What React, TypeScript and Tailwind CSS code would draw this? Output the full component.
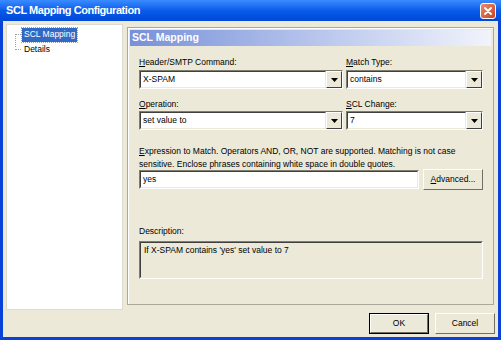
import React from 'react';

const font = "font-['Liberation_Sans',sans-serif]";

function Combo({ value, width }: { value: string; width: string }) {
  return (
    <div className={`${width} h-[19px] flex bg-white border border-t-[#7F7C70] border-l-[#7F7C70] border-b-white border-r-white`}>
      <div className="flex-1 flex items-center pl-[2px] border border-t-[#404040] border-l-[#404040] border-b-[#ECE9D8] border-r-[#ECE9D8] text-[8.5px] text-black">
        {value}
      </div>
      <div className="w-[16px] flex items-center justify-center bg-[#ECE9D8] border border-t-white border-l-white border-b-[#404040] border-r-[#404040]">
        <svg width="7" height="4" viewBox="0 0 7 4">
          <path d="M0 0h7L3.5 4z" fill="#000" />
        </svg>
      </div>
    </div>
  );
}

function Btn({ children, isDefault }: { children: React.ReactNode; isDefault?: boolean }) {
  return (
    <div className={`w-[60px] h-[21px] ${isDefault ? 'border border-black' : ''}`}>
      <div className="w-full h-full flex items-center justify-center bg-[#ECE9D8] border border-t-white border-l-white border-b-[#716F64] border-r-[#716F64] text-[8.5px] text-black">
        {children}
      </div>
    </div>
  );
}

export default function App() {
  return (
    <div className={`w-[501px] h-[340px] bg-[#0842D8] flex flex-col ${font}`}>
      <div className="h-[21px] flex items-center justify-between pl-[6px] pr-[5px] bg-gradient-to-b from-[#3A8CFF] via-[#0A5BEB] to-[#0048D6]">
        <span className="text-white font-bold text-[11px] tracking-[-0.45px]">SCL Mapping Configuration</span>
        <div className="w-[16px] h-[16px] rounded-[3px] border border-white bg-gradient-to-br from-[#E98A6C] to-[#C8421F] flex items-center justify-center">
          <svg width="8" height="8" viewBox="0 0 8 8">
            <path d="M1 1l6 6M7 1l-6 6" stroke="#fff" strokeWidth="1.8" strokeLinecap="round" />
          </svg>
        </div>
      </div>
      <div className="flex-1 mx-[3px] mb-[3px] bg-[#ECE9D8] flex flex-col">
        <div className="flex gap-[4px] pt-[3px] pl-[3px]">
          {/* tree */}
          <div className="w-[117px] h-[286px] bg-white border border-[#DDDBD0] pt-[2px] text-[8.5px]">
            <div className="relative pl-[15px]">
              <div className="absolute left-[8px] top-[7px] h-[13px] border-l border-dotted border-[#A0A0A0]" />
              <div className="flex items-center h-[15px]">
                <span className="w-[6px] border-t border-dotted border-[#A0A0A0] -ml-[7px] mr-[1px]" />
                <span className="bg-[#316AC5] text-white px-[2px] h-[14px] flex items-center outline outline-1 outline-dotted outline-[#C0A060]">SCL Mapping</span>
              </div>
              <div className="flex items-center h-[14px]">
                <span className="w-[6px] border-t border-dotted border-[#A0A0A0] -ml-[7px] mr-[1px]" />
                <span className="px-[2px] text-black">Details</span>
              </div>
            </div>
          </div>
          {/* panel */}
          <div className="mt-[3px] w-[367px] h-[278px] border border-[#ACA899] shadow-[inset_1px_1px_0_#fff] p-[2px] flex flex-col">
            <div className="h-[16px] flex items-center pl-[2px] bg-gradient-to-r from-[#7890D8] via-[#B6C4EC] to-[#F2F4FB]">
              <span className="text-white font-bold text-[10.5px]">SCL Mapping</span>
            </div>
            <div className="pl-[9px] pt-[9px] text-[8.5px] text-black">
              <div className="grid grid-cols-[204px_137px] gap-x-[3px]">
                <div className="h-[14px] leading-[14px]"><u>H</u>eader/SMTP Command:</div>
                <div className="h-[14px] leading-[14px]"><u>M</u>atch Type:</div>
                <div className="mt-[1px]"><Combo value="X-SPAM" width="w-[204px]" /></div>
                <div className="mt-[1px]"><Combo value="contains" width="w-[137px]" /></div>
                <div className="mt-[8px] h-[14px] leading-[14px]"><u>O</u>peration:</div>
                <div className="mt-[8px] h-[14px] leading-[14px]"><u>S</u>CL Change:</div>
                <div><Combo value="set value to" width="w-[204px]" /></div>
                <div><Combo value="7" width="w-[137px]" /></div>
              </div>
              <div className="mt-[15px] leading-[13px] w-[344px]">
                <u>E</u>xpression to Match. Operators AND, OR, NOT are supported. Matching is not case sensitive. Enclose phrases containing white space in double quotes.
              </div>
              <div className="-mt-[2px] flex gap-[4px] items-center">
                <div className="w-[280px] h-[19px] bg-white border border-t-[#7F7C70] border-l-[#7F7C70] border-b-white border-r-white">
                  <div className="h-full flex items-center pl-[2px] border border-t-[#404040] border-l-[#404040] border-b-[#ECE9D8] border-r-[#ECE9D8]">yes</div>
                </div>
                <Btn><span><u>A</u>dvanced...</span></Btn>
              </div>
              <div className="mt-[34px] h-[14px] leading-[14px]">Description:</div>
              <div className="mt-[3px] w-[344px] h-[38px] border border-t-[#7F7C70] border-l-[#7F7C70] border-b-white border-r-white">
                <div className="h-full pl-[3px] pt-[1px] border border-t-[#404040] border-l-[#404040] border-b-[#ECE9D8] border-r-[#ECE9D8]">
                  If X-SPAM contains 'yes' set value to 7
                </div>
              </div>
            </div>
          </div>
        </div>
        <div className="mt-[3px] flex justify-end gap-[6px] pr-[3px]">
          <Btn isDefault>OK</Btn>
          <Btn>Cancel</Btn>
        </div>
      </div>
    </div>
  );
}
